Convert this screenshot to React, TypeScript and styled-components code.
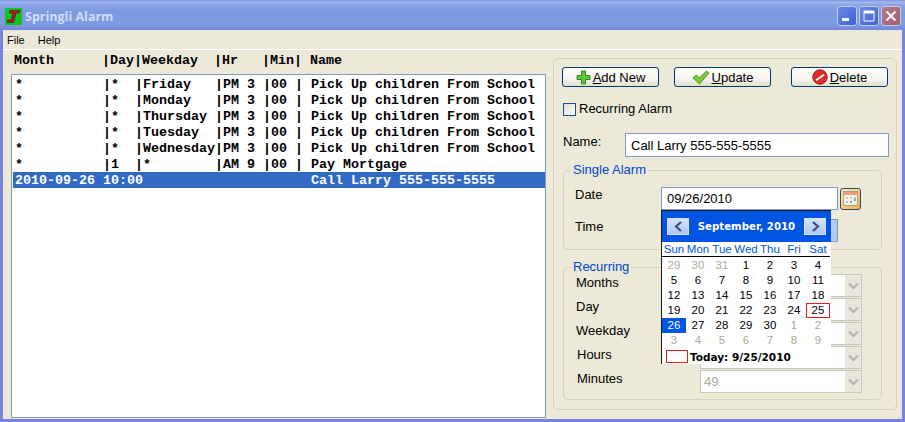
import React from 'react'
import styled, { createGlobalStyle } from 'styled-components'

const UI_FONT = '"Liberation Sans", Arial, sans-serif'
const BOLD_FONT = '"DejaVu Sans", Verdana, sans-serif'

const HEADER = 'Month      |Day|Weekday  |Hr   |Min| Name'
const ROWS = [
  '*          |*  |Friday   |PM 3 |00 | Pick Up children From School',
  '*          |*  |Monday   |PM 3 |00 | Pick Up children From School',
  '*          |*  |Thursday |PM 3 |00 | Pick Up children From School',
  '*          |*  |Tuesday  |PM 3 |00 | Pick Up children From School',
  '*          |*  |Wednesday|PM 3 |00 | Pick Up children From School',
  '*          |1  |*        |AM 9 |00 | Pay Mortgage',
  '2010-09-26 10:00                     Call Larry 555-555-5555',
]
const SELECTED_ROW = 6

const WEEK_DAYS = ['Sun', 'Mon', 'Tue', 'Wed', 'Thu', 'Fri', 'Sat']
const DAYS: { n: number; muted?: boolean }[] = [
  { n: 29, muted: true }, { n: 30, muted: true }, { n: 31, muted: true },
  ...Array.from({ length: 30 }, (_, i) => ({ n: i + 1 })),
  ...[1, 2, 3, 4, 5, 6, 7, 8, 9].map(n => ({ n, muted: true })),
]
const RECURRING = [
  { label: 'Months' },
  { label: 'Day' },
  { label: 'Weekday' },
  { label: 'Hours', nudge: true },
  { label: 'Minutes', value: '49', nudge: true },
]

const Global = createGlobalStyle`
  html, body { margin: 0; padding: 0; background: #fff; }
  body { font-family: ${UI_FONT}; font-size: 13px; color: #000; }
`

const Window = styled.div`
  width: 905px;
  height: 422px;
  display: flex;
  flex-direction: column;
  overflow: hidden;
  box-sizing: border-box;
  background: #7584e0;
`
const TitleBar = styled.div`
  height: 30px;
  flex: none;
  display: flex;
  align-items: center;
  box-sizing: border-box;
  padding: 3px 4px 1px 5px;
  background: linear-gradient(180deg, #7a8fe0 0, #a5b8ee 2px, #8aa3e6 5px, #7c9ae0 12px, #7d9be1 24px, #7286dd 30px);
`
const TitleText = styled.span`
  margin: 1px 0 0 3px;
  font: bold 12.5px "Open Sans", sans-serif;
  color: #d4dff6;
  flex: 1;
`
const CaptionButton = styled.div<{ $close?: boolean }>`
  width: 20px;
  height: 20px;
  margin-left: 2px;
  box-sizing: border-box;
  display: flex;
  align-items: center;
  justify-content: center;
  border: 1px solid #c3cdf0;
  border-radius: 3px;
  background: ${p => p.$close
    ? 'linear-gradient(135deg, #b27a90, #a45c6c)'
    : 'linear-gradient(135deg, #6a8ae6, #3f62d8)'};
`
const Client = styled.div`
  flex: 1;
  min-height: 0;
  margin: 0 3px 3px;
  display: flex;
  flex-direction: column;
  background: #ece9d8;
`
const MenuBar = styled.div`
  height: 20px;
  flex: none;
  box-sizing: border-box;
  border-bottom: 1px solid #fff;
  display: flex;
  align-items: center;
  padding: 1px 0 0 4px;
  gap: 13px;
  font-size: 11px;
`
const Body = styled.div`
  flex: 1;
  min-height: 0;
  display: flex;
  padding: 0 5px 1px 8px;
`
const LeftColumn = styled.div`
  width: 535px;
  display: flex;
  flex-direction: column;
`
const ColumnHeader = styled.div`
  height: 24px;
  flex: none;
  box-sizing: border-box;
  padding: 1px 0 0 3px;
  font: bold 13.33px/20px "Liberation Mono", "Courier New", monospace;
  white-space: pre;
`
const AlarmList = styled.div`
  flex: 1;
  box-sizing: border-box;
  background: #fff;
  border: 1px solid #7f9db9;
  padding: 1px 0 0 1px;
`
const AlarmRow = styled.div<{ $selected?: boolean }>`
  height: 16px;
  box-sizing: border-box;
  padding: 1px 0 0 2px;
  font: bold 13.33px/16px "Liberation Mono", "Courier New", monospace;
  white-space: pre;
  overflow: hidden;
  color: ${p => (p.$selected ? '#fff' : '#000')};
  background: ${p => (p.$selected ? '#316ac5' : 'transparent')};
`
const RightPanel = styled.div`
  width: 344px;
  margin: 8px 0 8px 7px;
  box-sizing: border-box;
  border: 1px solid #d5d1bd;
  border-radius: 5px;
  padding: 8px 7px 0 8px;
  display: flex;
  flex-direction: column;
`
const ButtonRow = styled.div`
  display: flex;
  gap: 15px;
`
const PushButton = styled.div<{ $push?: boolean }>`
  width: 97px;
  height: 20px;
  box-sizing: border-box;
  display: flex;
  align-items: center;
  justify-content: center;
  gap: 2px;
  margin-left: ${p => (p.$push ? '5px' : '0')};
  border: 1px solid #003c74;
  border-radius: 3px;
  background: linear-gradient(180deg, #fff 0, #f6f5ee 60%, #e3e0d0 100%);
  u { text-underline-offset: 1px; }
`
const CheckRow = styled.div`
  margin: 14px 0 0 1px;
  height: 15px;
  display: flex;
  align-items: center;
  gap: 3px;
`
const CheckBox = styled.div`
  width: 13px;
  height: 13px;
  margin-top: 2px;
  box-sizing: border-box;
  border: 1px solid #1c5180;
  background: linear-gradient(135deg, #dcdcd7, #fff);
`
const NameRow = styled.div`
  margin: 17px 0 0 1px;
  display: flex;
  align-items: center;
`
const NameLabel = styled.span`
  width: 62px;
  margin-top: -8px;
`
const TextField = styled.div<{ $w: number; $h: number }>`
  width: ${p => p.$w}px;
  height: ${p => p.$h}px;
  box-sizing: border-box;
  border: 1px solid #7f9db9;
  background: #fff;
  padding-left: 5px;
  display: flex;
  align-items: center;
  position: relative;
`
const Group = styled.fieldset`
  margin: 6px 7px 0 1px;
  padding: 10px 0 7px 11px;
  min-width: 0;
  border: 1px solid #d5d1bd;
  border-radius: 5px;
  & + & { margin-top: 10px; padding: 0 0 6px 12px; }
`
const GroupTitle = styled.legend`
  margin-left: -4px;
  padding: 0 2px;
  font-size: 13px;
  line-height: 14px;
  color: #0046d5;
  fieldset + fieldset > & { margin-left: -5px; }
`
const FieldRow = styled.div`
  height: 23px;
  display: flex;
  align-items: center;
  & + & { margin-top: 9px; }
`
const FieldLabel = styled.span`
  width: 86px;
  margin-top: -9px;
`
const CalendarButton = styled.div`
  width: 21px;
  height: 22px;
  margin-left: 2px;
  box-sizing: border-box;
  border: 1px solid #2f4a6a;
  border-radius: 3px;
  background: linear-gradient(135deg, #fde9b8, #f5b041);
  display: flex;
  align-items: center;
  justify-content: center;
`
const TimeSpinner = styled.div`
  position: absolute;
  right: 0;
  top: 0;
  bottom: 0;
  width: 15px;
  background: linear-gradient(90deg, #d6e2fb, #aec4f3);
`
const Popup = styled.div`
  position: absolute;
  left: -1px;
  top: 22px;
  width: 170px;
  height: 154px;
  box-sizing: border-box;
  z-index: 5;
  background: #fff;
  border-left: 1px solid #1a1a1a;
  border-top: 1px solid #1a1a1a;
`
const PopupHead = styled.div`
  height: 30px;
  display: flex;
  align-items: center;
  justify-content: space-between;
  padding: 0 5px 1px 5px;
  background: #0054e3;
  color: #fff;
  font: bold 10.2px ${BOLD_FONT};
`
const NavButton = styled.div`
  width: 22px;
  height: 17px;
  display: flex;
  align-items: center;
  justify-content: center;
  border: 1px solid #d8e4fb;
  box-sizing: border-box;
  background: linear-gradient(180deg, #d6e2fb, #aec6f5);
`
const WeekHead = styled.div`
  display: grid;
  grid-template-columns: repeat(7, 24px);
  height: 14px;
  margin: 0 1px 1px 0;
  border-bottom: 1px solid #000;
  box-sizing: content-box;
  color: #0054e3;
  font-size: 11.5px;
  line-height: 15px;
  text-align: center;
`
const DayGrid = styled.div`
  display: grid;
  grid-template-columns: repeat(7, 24px);
  grid-auto-rows: 15px;
`
const Day = styled.div<{ $muted?: boolean; $selected?: boolean; $today?: boolean }>`
  box-sizing: border-box;
  font-size: 11.5px;
  line-height: 15px;
  text-align: center;
  color: ${p => (p.$selected ? '#fff' : p.$muted ? '#aca899' : '#000')};
  background: ${p => (p.$selected ? '#0054e3' : 'transparent')};
  ${p => (p.$today ? 'border: 1px solid #e81c1c; line-height: 13px;' : '')}
`
const TodayRow = styled.div`
  margin: 2px 0 0 4px;
  display: flex;
  align-items: center;
  gap: 2px;
  font: bold 10.5px ${BOLD_FONT};
`
const TodayBox = styled.div`
  width: 22px;
  height: 13px;
  box-sizing: border-box;
  border: 1px solid #e81c1c;
`
const SelectRow = styled.div`
  height: 23px;
  display: flex;
  align-items: center;
  & + & { margin-top: 1px; }
`
const SelectLabel = styled.span<{ $nudge?: boolean }>`
  width: ${p => (p.$nudge ? 123 : 124)}px;
  margin-left: ${p => (p.$nudge ? 1 : 0)}px;
  margin-top: -7px;
`
const DisabledSelect = styled.div`
  width: 162px;
  height: 23px;
  box-sizing: border-box;
  border: 1px solid #c9c7ba;
  background: #fff;
  color: #aca899;
  padding-left: 3px;
  display: flex;
  align-items: center;
  justify-content: space-between;
`
const SelectArrow = styled.div`
  width: 16px;
  height: 21px;
  background: #e9e7dd;
  display: flex;
  align-items: center;
  justify-content: center;
`

const AppLogo = () => (
  <svg width="17" height="17" viewBox="0 0 17 17">
    <rect width="17" height="17" fill="#12c21e" />
    <path d="M5 2.500h10l-1 2.500h-3l-2.500 9.500H2l.6-2.500h3.400L8 5H4.400z" fill="#c8102e" stroke="#222" strokeWidth=".6" />
  </svg>
)
const PlusIcon = () => (
  <svg width="15" height="15" viewBox="0 0 15 15">
    <path d="M5.500 1h4v4.500h4.500v4h-4.500v4.500h-4v-4.500h-4.500v-4h4.500z" fill="#5fc83a" stroke="#2f8a1c" />
  </svg>
)
const CheckIcon = () => (
  <svg width="18" height="15" viewBox="0 0 18 15">
    <path d="M1 8l3-3 3.500 3L14.500 1 17 3 7.500 14z" fill="#7ecb3c" stroke="#4b9a20" />
  </svg>
)
const DeleteIcon = () => (
  <svg width="16" height="16" viewBox="0 0 16 16">
    <circle cx="8" cy="8" r="7.200" fill="#e22c2c" stroke="#a81212" />
    <path d="M3.500 10.500l8-5.500 1 1.500-8 5.500z" fill="#fff" />
  </svg>
)
const CalendarIcon = () => (
  <svg width="15" height="15" viewBox="0 0 15 15">
    <rect x=".5" y=".5" width="14" height="14" fill="#f6f3e8" stroke="#a8a090" />
    <rect x="1" y="1" width="13" height="3" fill="#e8a080" />
    <path d="M3 6h2v2H3zM7 6h2v2H7zM11 6h2v2h-2zM3 10h2v2H3z" fill="#b8c4d8" />
    <path d="M7 10h2v2H7zM11 8h2v2h-2z" fill="#6fb26f" />
  </svg>
)
const Chevron = ({ dir }: { dir: 'left' | 'right' }) => (
  <svg width="9" height="11" viewBox="0 0 9 11">
    <path d={dir === 'left' ? 'M7 1L2 5.500 7 10' : 'M2 1l5 4.500L2 10'} fill="none" stroke="#3c5080" strokeWidth="2.200" />
  </svg>
)
const DownArrow = () => (
  <svg width="11" height="8" viewBox="0 0 11 8">
    <path d="M1 1.500l4.500 4.500L10 1.500" fill="none" stroke="#b5b3a8" strokeWidth="2.200" />
  </svg>
)

export default function App() {
  return (
    <Window>
      <Global />
      <TitleBar>
        <AppLogo />
        <TitleText>Springli Alarm</TitleText>
        <CaptionButton>
          <svg width="12" height="12" viewBox="0 0 12 12"><rect x="1" y="8" width="7" height="3" fill="#fff" /></svg>
        </CaptionButton>
        <CaptionButton>
          <svg width="12" height="12" viewBox="0 0 12 12"><path d="M1 1h10v10H1zM1 3h10" fill="none" stroke="#fff" /><rect x="1" y="1" width="10" height="2" fill="#fff" /></svg>
        </CaptionButton>
        <CaptionButton $close>
          <svg width="12" height="12" viewBox="0 0 12 12"><path d="M1.500 1.500l9 9M10.500 1.500l-9 9" stroke="#fff" strokeWidth="2" /></svg>
        </CaptionButton>
      </TitleBar>
      <Client>
        <MenuBar>
          <span>File</span>
          <span>Help</span>
        </MenuBar>
        <Body>
          <LeftColumn>
            <ColumnHeader>{HEADER}</ColumnHeader>
            <AlarmList>
              {ROWS.map((row, i) => (
                <AlarmRow key={i} $selected={i === SELECTED_ROW}>{row}</AlarmRow>
              ))}
            </AlarmList>
          </LeftColumn>
          <RightPanel>
            <ButtonRow>
              <PushButton><PlusIcon /><span><u>A</u>dd New</span></PushButton>
              <PushButton><CheckIcon /><span><u>U</u>pdate</span></PushButton>
              <PushButton $push><DeleteIcon /><span><u>D</u>elete</span></PushButton>
            </ButtonRow>
            <CheckRow>
              <CheckBox />
              <span>Recurring Alarm</span>
            </CheckRow>
            <NameRow>
              <NameLabel>Name:</NameLabel>
              <TextField $w={264} $h={24}>Call Larry 555-555-5555</TextField>
            </NameRow>
            <Group>
              <GroupTitle>Single Alarm</GroupTitle>
              <FieldRow>
                <FieldLabel>Date</FieldLabel>
                <TextField $w={177} $h={23}>
                  09/26/2010
                  <Popup>
                    <PopupHead>
                      <NavButton><Chevron dir="left" /></NavButton>
                      <span>September, 2010</span>
                      <NavButton><Chevron dir="right" /></NavButton>
                    </PopupHead>
                    <WeekHead>
                      {WEEK_DAYS.map(d => <span key={d}>{d}</span>)}
                    </WeekHead>
                    <DayGrid>
                      {DAYS.map((d, i) => (
                        <Day
                          key={i}
                          $muted={d.muted}
                          $selected={!d.muted && d.n === 26}
                          $today={!d.muted && d.n === 25}
                        >
                          {d.n}
                        </Day>
                      ))}
                    </DayGrid>
                    <TodayRow>
                      <TodayBox />
                      <span>Today: 9/25/2010</span>
                    </TodayRow>
                  </Popup>
                </TextField>
                <CalendarButton><CalendarIcon /></CalendarButton>
              </FieldRow>
              <FieldRow>
                <FieldLabel>Time</FieldLabel>
                <TextField $w={177} $h={23}><TimeSpinner /></TextField>
              </FieldRow>
            </Group>
            <Group>
              <GroupTitle>Recurring</GroupTitle>
              {RECURRING.map(r => (
                <SelectRow key={r.label}>
                  <SelectLabel $nudge={r.nudge}>{r.label}</SelectLabel>
                  <DisabledSelect>
                    <span>{r.value}</span>
                    <SelectArrow><DownArrow /></SelectArrow>
                  </DisabledSelect>
                </SelectRow>
              ))}
            </Group>
          </RightPanel>
        </Body>
      </Client>
    </Window>
  )
}
